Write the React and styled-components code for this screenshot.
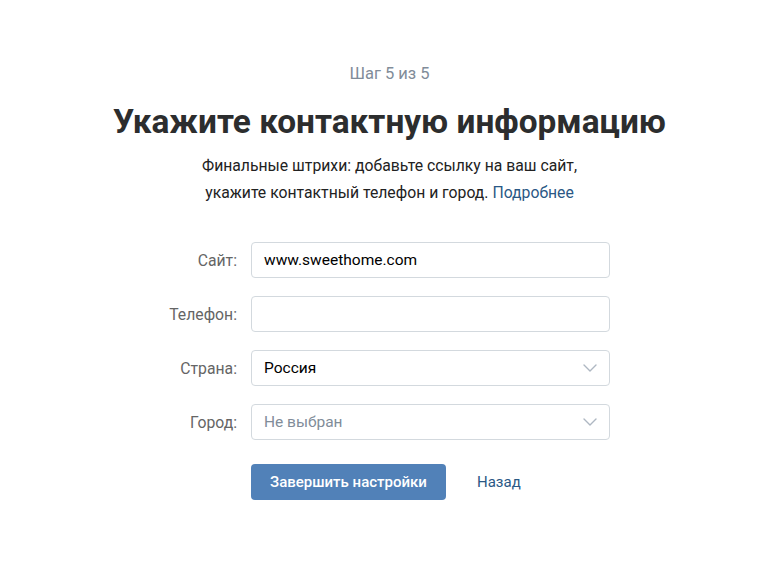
import React from "react";
import styled, { createGlobalStyle } from "styled-components";

const GlobalStyle = createGlobalStyle`
  html, body {
    margin: 0;
    padding: 0;
    background: #fff;
  }
  body {
    font-family: Roboto, "Noto Sans", Arial, sans-serif;
    -webkit-font-smoothing: antialiased;
  }
`;

const Page = styled.div`
  width: 779px;
  min-height: 563px;
  display: flex;
  flex-direction: column;
  align-items: center;
  padding-top: 64px;
  box-sizing: border-box;
`;

const Step = styled.div`
  font-size: 16.5px;
  line-height: 20px;
  color: #818c99;
`;

const Title = styled.h1`
  margin: 18px 0 0;
  font-size: 33.4px;
  line-height: 40px;
  font-weight: 700;
  color: #2c2d2e;
`;

const Lead = styled.p`
  margin: 10px 0 0;
  font-size: 15.75px;
  line-height: 27px;
  color: #222;
  text-align: center;
`;

const Link = styled.a`
  color: #2a5885;
  text-decoration: none;
  cursor: pointer;
`;

const Form = styled.div`
  margin-top: 36px;
  display: grid;
  grid-template-columns: 86px 359px;
  column-gap: 14px;
  row-gap: 18px;
  align-items: center;
  margin-right: 18px;
`;

const Label = styled.label`
  font-size: 15.75px;
  color: #656565;
  text-align: right;
`;

const Field = styled.div`
  position: relative;
  height: 36px;
  box-sizing: border-box;
  border: 1px solid #d3d9de;
  border-radius: 4px;
  display: flex;
  align-items: center;
  padding: 0 12px;
  font-size: 15.5px;
  color: ${(p) => (p.$muted ? "#818c99" : "#000")};
`;

const Chevron = styled.svg`
  position: absolute;
  right: 12px;
  top: 50%;
  transform: translateY(-50%);
`;

const Actions = styled.div`
  grid-column: 2;
  display: flex;
  align-items: center;
  gap: 31px;
  margin-top: 6px;
`;

const Primary = styled.button`
  height: 36px;
  width: 195px;
  border: none;
  border-radius: 4px;
  background: #5181b8;
  color: #fff;
  font-family: inherit;
  font-size: 15px;
  font-weight: 500;
  cursor: pointer;
`;

const Back = styled(Link)`
  font-size: 15px;
`;

function ChevronDown() {
  return (
    <Chevron width="14" height="8" viewBox="0 0 14 8" fill="none">
      <path d="M1 1l6 6 6-6" stroke="#aeb7c2" strokeWidth="1.4" strokeLinecap="round" strokeLinejoin="round" />
    </Chevron>
  );
}

const fields = [
  { label: "Сайт:", value: "www.sweethome.com" },
  { label: "Телефон:", value: "" },
  { label: "Страна:", value: "Россия", select: true },
  { label: "Город:", value: "Не выбран", select: true, muted: true },
];

export default function App() {
  return (
    <>
      <GlobalStyle />
      <Page>
        <Step>Шаг 5 из 5</Step>
        <Title>Укажите контактную информацию</Title>
        <Lead>
          Финальные штрихи: добавьте ссылку на ваш сайт,
          <br />
          укажите контактный телефон и город. <Link>Подробнее</Link>
        </Lead>
        <Form>
          {fields.map((f) => (
            <React.Fragment key={f.label}>
              <Label>{f.label}</Label>
              <Field $muted={f.muted}>
                {f.value}
                {f.select && <ChevronDown />}
              </Field>
            </React.Fragment>
          ))}
          <Actions>
            <Primary>Завершить настройки</Primary>
            <Back>Назад</Back>
          </Actions>
        </Form>
      </Page>
    </>
  );
}
